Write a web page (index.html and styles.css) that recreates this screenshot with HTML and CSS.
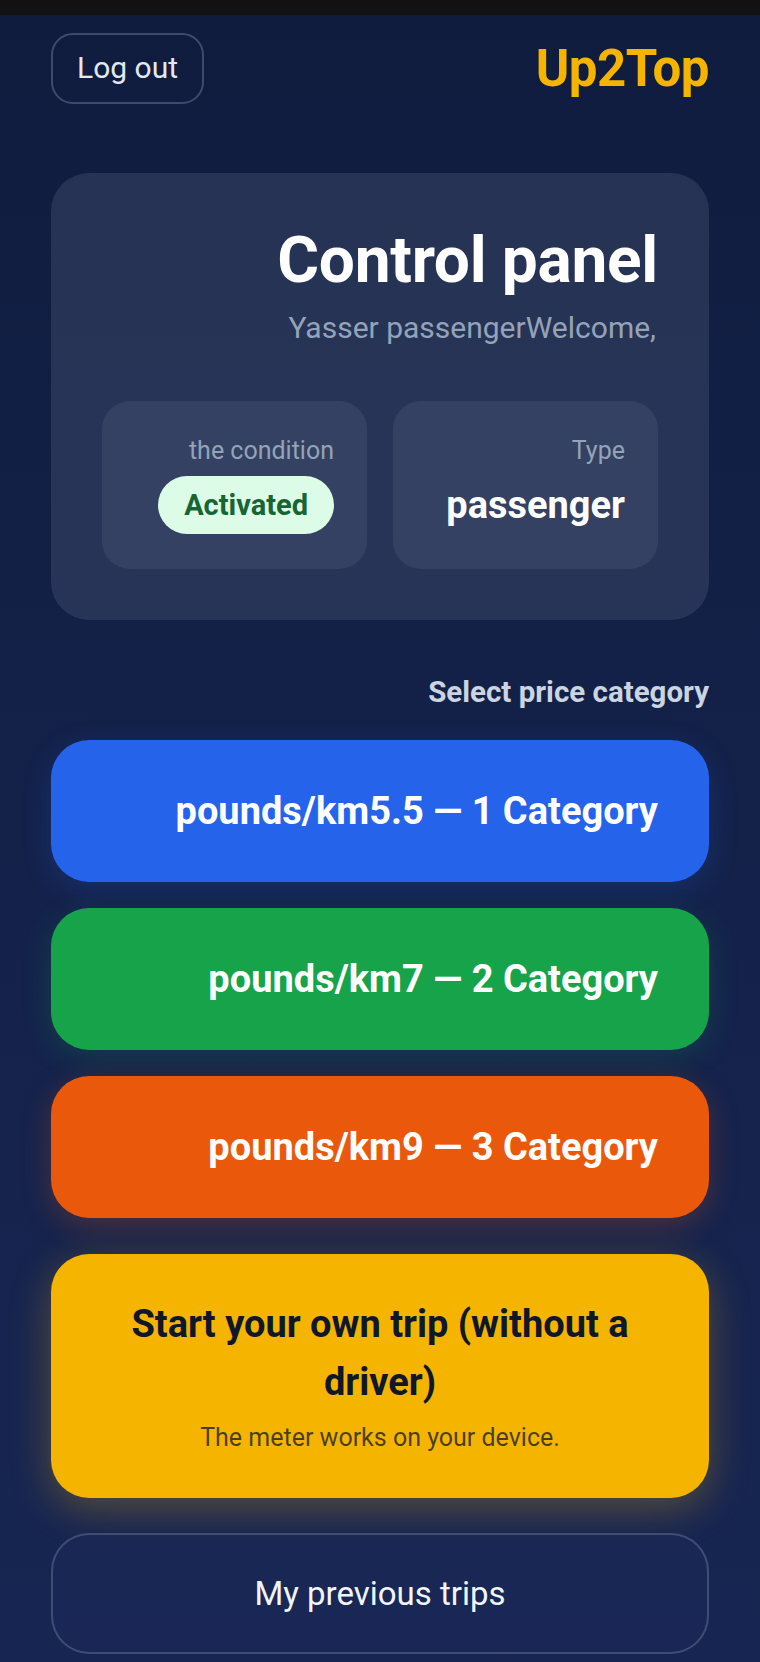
FILE: index.html
```html
<!DOCTYPE html>
<html lang="en">
<head>
    <meta charset="UTF-8">
    <meta name="viewport" content="width=device-width, initial-scale=1.0">
    <title>Up2Top - Control panel</title>
    <link rel="stylesheet" href="styles.css">
</head>
<body>
    <div class="statusbar"></div>
    <div class="page">
        <header class="topbar">
            <button class="logout">Log out</button>
            <div class="logo">Up2Top</div>
        </header>

        <section class="panel">
            <h1>Control panel</h1>
            <p class="welcome">Yasser passengerWelcome,</p>
            <div class="stats">
                <div class="stat">
                    <span class="stat-label">the condition</span>
                    <span class="badge">Activated</span>
                </div>
                <div class="stat">
                    <span class="stat-label">Type</span>
                    <span class="stat-value">passenger</span>
                </div>
            </div>
        </section>

        <h2 class="section-title">Select price category</h2>
        <div class="categories">
            <button class="category blue">pounds/km5.5 — 1 Category</button>
            <button class="category green">pounds/km7 — 2 Category</button>
            <button class="category orange">pounds/km9 — 3 Category</button>
        </div>

        <button class="own-trip">
            <span class="own-title">Start your own trip (without a driver)</span>
            <span class="own-sub">The meter works on your device.</span>
        </button>

        <button class="history">My previous trips</button>
    </div>
</body>
</html>
```

FILE: styles.css
```css
* {
    box-sizing: border-box;
}
body {
    margin: 0;
    min-height: 1662px;
    font-family: Roboto, "Noto Sans", Arial, sans-serif;
    color: #fff;
    background: linear-gradient(180deg, #0f1c3e 0%, #14224a 50%, #172552 100%);
}
button {
    font-family: inherit;
    cursor: pointer;
}
.statusbar {
    height: 15px;
    background: #121212;
}
.page {
    padding: 18px 51px 0;
}
.topbar {
    display: flex;
    justify-content: space-between;
    align-items: center;
}
.logout {
    background: transparent;
    color: #e2e8f0;
    font-size: 30px;
    padding: 15px 24px 16px;
    border: 2px solid rgba(148, 163, 184, 0.35);
    border-radius: 22px;
    line-height: 1.2;
}
.logo {
    color: #f4b400;
    font-size: 51px;
    font-weight: 700;
    letter-spacing: -0.5px;
}
.panel {
    margin-top: 69px;
    background: rgba(148, 163, 184, 0.16);
    border-radius: 38px;
    padding: 50px 51px 51px;
    text-align: right;
}
.panel h1 {
    margin: 0;
    font-size: 64px;
    line-height: 1.2;
    font-weight: 700;
    letter-spacing: -0.3px;
}
.welcome {
    margin: 10px 2px 0 0;
    font-size: 30px;
    color: #94a3b8;
}
.stats {
    display: grid;
    grid-template-columns: 1fr 1fr;
    gap: 26px;
    margin-top: 56px;
}
.stat {
    background: rgba(148, 163, 184, 0.12);
    border-radius: 28px;
    padding: 35px 33px 35px;
    display: flex;
    flex-direction: column;
    align-items: flex-end;
    gap: 10px;
}
.stat-label {
    font-size: 25px;
    line-height: 30px;
    color: #94a3b8;
}
.badge {
    background: #dcfce7;
    color: #166534;
    font-size: 29px;
    font-weight: 700;
    line-height: 34px;
    padding: 12px 26px;
    border-radius: 999px;
}
.stat-value {
    font-size: 38px;
    font-weight: 700;
    line-height: 58px;
}
.section-title {
    margin: 55px 0 0;
    text-align: right;
    font-size: 29.5px;
    line-height: 34px;
    font-weight: 700;
    color: #cbd5e1;
}
.categories {
    display: flex;
    flex-direction: column;
    gap: 26px;
    margin-top: 31px;
}
.category {
    height: 142px;
    border: none;
    border-radius: 38px;
    padding: 0 51px;
    text-align: right;
    color: #fff;
    font-size: 38px;
    font-weight: 700;
}
.blue {
    background: #2563eb;
    box-shadow: 0 8px 30px rgba(37, 99, 235, 0.2);
}
.green {
    background: #16a34a;
    box-shadow: 0 8px 30px rgba(22, 163, 74, 0.2);
}
.orange {
    background: #ea580c;
    box-shadow: 0 8px 30px rgba(234, 88, 12, 0.25);
}
.own-trip {
    width: 100%;
    margin-top: 36px;
    border: none;
    border-radius: 38px;
    background: #f4b400;
    color: #0f172a;
    padding: 41px 60px 42px;
    display: flex;
    flex-direction: column;
    align-items: center;
    gap: 9px;
    box-shadow: 0 10px 40px rgba(244, 180, 0, 0.3);
}
.own-title {
    font-size: 38px;
    font-weight: 700;
    line-height: 58px;
}
.own-sub {
    font-size: 25px;
    line-height: 36px;
    color: rgba(15, 23, 42, 0.75);
}
.history {
    width: 100%;
    height: 121px;
    margin-top: 35px;
    background: rgba(30, 41, 90, 0.55);
    border: 2px solid rgba(148, 163, 184, 0.3);
    border-radius: 38px;
    color: #f1f5f9;
    font-size: 33px;
}
```
